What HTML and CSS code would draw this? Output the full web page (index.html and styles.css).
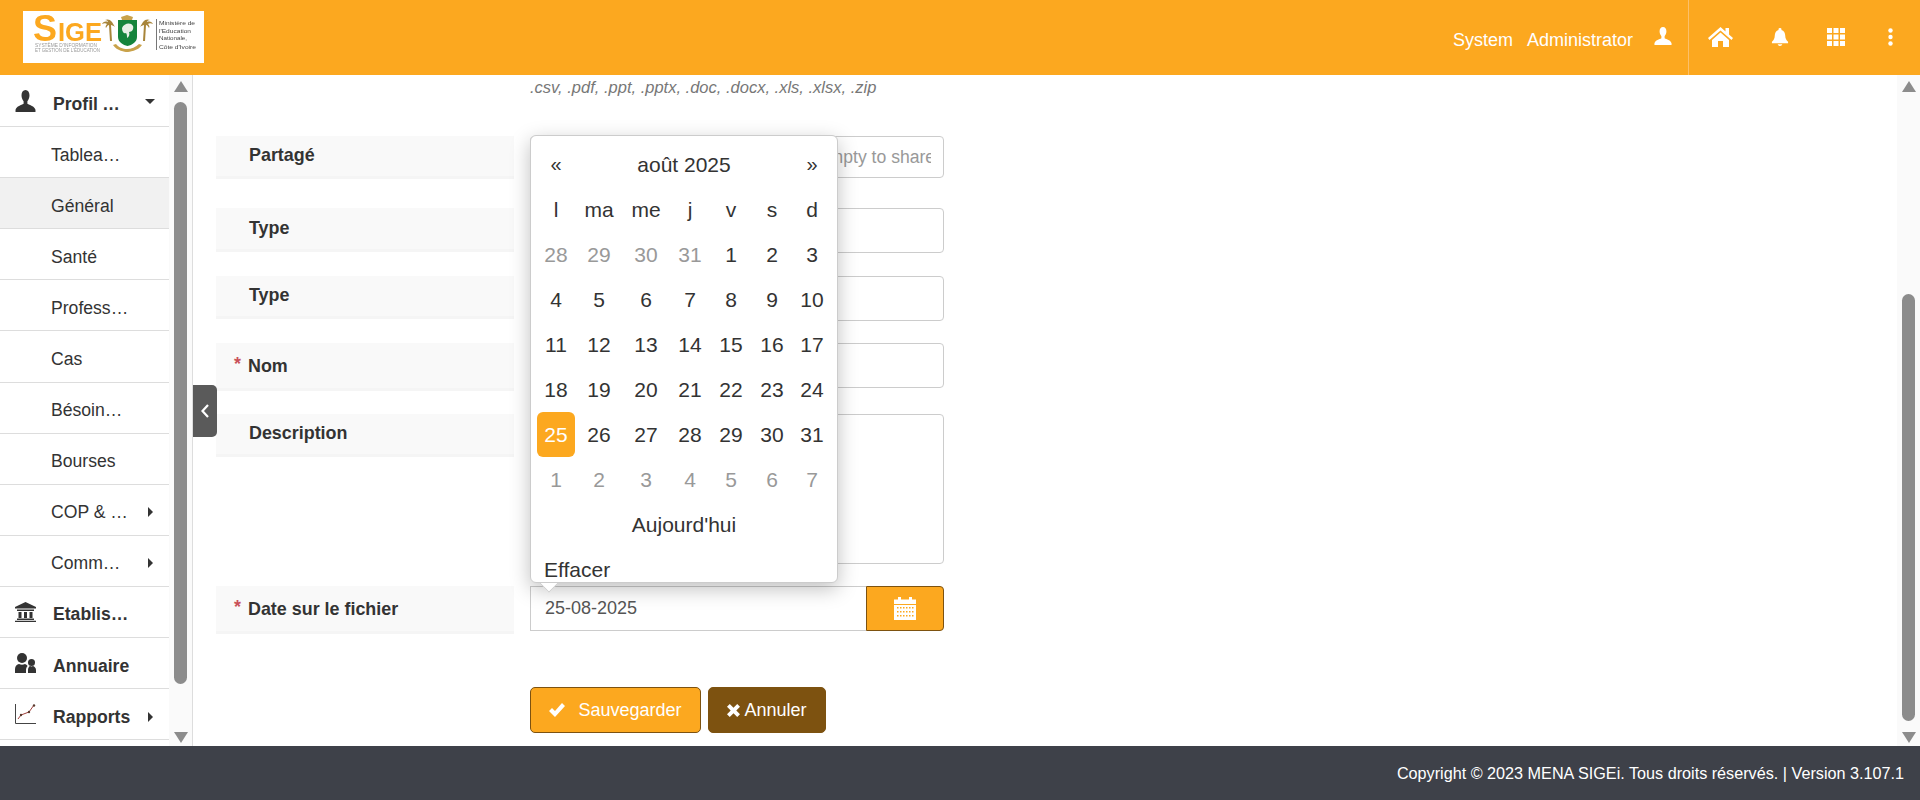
FILE: index.html
```html
<!DOCTYPE html>
<html lang="fr">

<head>
    <meta charset="utf-8">
    <title>SIGE - Document</title>
    <link rel="stylesheet" href="styles.css">
</head>

<body>
    <!-- Top bar -->
    <header class="topbar">
        <div class="logo">
            <svg viewBox="0 0 181 52" width="181" height="52">
                <g class="logo-soft">
                    <text class="logo-sige" x="10" y="30" font-size="36" textLength="24" lengthAdjust="spacingAndGlyphs">S</text>
                    <text class="logo-sige" x="35" y="30" font-size="25" textLength="44" lengthAdjust="spacingAndGlyphs">IGE</text>
                    <text class="logo-small" x="12" y="36" font-size="4.6" textLength="62" lengthAdjust="spacingAndGlyphs">SYSTÈME D'INFORMATION</text>
                    <text class="logo-small" x="12" y="41" font-size="4.6" textLength="65" lengthAdjust="spacingAndGlyphs">ET GESTION DE L'ÉDUCATION</text>
                    <path fill="#a8853a" d="M89 11c-2-3-5-3-7-2 2 0 3 1 3 2-3-1-5 0-6 2 2-1 4-1 5 0-1 1-2 3-1 4 1-2 2-3 3-3l1 16h2l-1-16c1 0 3 1 4 2z" />
                    <path fill="#a8853a" d="M120 11c2-3 5-3 7-2-2 0-3 1-3 2 3-1 5 0 6 2-2-1-4-1-5 0 1 1 2 3 1 4-1-2-2-3-3-3l-1 16h-2l1-16c-1 0-3 1-4 2z" />
                    <path fill="#c9a24a" d="M98 6l3-1 3-1 3 1 3 1-1 3H99z" />
                    <path fill="#c9a24a" d="M90 34c4 6 12 7 14 7s11-1 15-7l-3-1c-3 3-8 5-12 5s-9-2-11-5z" />
                    <path fill="#16843c" d="M95 9h19v17c0 5-5 8-9.500 9-4.500-1-9.500-4-9.500-9z" />
                    <path fill="#e8efe6" d="M99 17c2-5 9-6 11-2 1 3-1 6-4 6 1 2 0 5-2 6 0-2 0-4-1-5-2 1-4-1-4-5z" />
                    <rect x="133" y="8" width="1" height="31" fill="#777" />
                    <g class="logo-minis" font-size="5.800">
                        <text x="136" y="14" textLength="36" lengthAdjust="spacingAndGlyphs">Ministère de</text>
                        <text x="136" y="22" textLength="32" lengthAdjust="spacingAndGlyphs">l'Education</text>
                        <text x="136" y="29" textLength="28" lengthAdjust="spacingAndGlyphs">Nationale,</text>
                        <text x="136" y="38" textLength="37" lengthAdjust="spacingAndGlyphs">Côte d'Ivoire</text>
                    </g>
                </g>
            </svg>
        </div>
        <div class="topbar-right">
            <span class="user-name">System</span>
            <span class="user-name">Administrator</span>
            <svg class="top-icon ic-user" viewBox="0 0 20 20"><use href="#i-user" /></svg>
            <nav class="top-nav">
                <svg class="ic-home" viewBox="0 0 25 20"><path d="M12.500 0L0 11l1.500 2 11-9.500 11 9.500 1.500-2-4-3.500V1h-3.500v3.500z" /><path d="M4 13l8.500-7.400L21 13v7h-6v-6h-5v6H4z" /></svg>
                <svg class="ic-bell" viewBox="0 0 18 20"><path d="M9 0a1.600 1.600 0 0 0-1.500 2C4.800 2.800 3.600 5 3.500 8c-.1 3-1 5-3 6.500V16h17v-1.500c-2-1.500-2.900-3.500-3-6.500-.1-3-1.300-5.200-4-6A1.600 1.600 0 0 0 9 0zM6.500 17a2.600 2.600 0 0 0 5 0z" /></svg>
                <svg class="ic-th" viewBox="0 0 18 18"><path d="M0 0h5v5H0zM6.500 0h5v5h-5zM13 0h5v5h-5zM0 6.500h5v5H0zM6.500 6.500h5v5h-5zM13 6.500h5v5h-5zM0 13h5v5H0zM6.500 13h5v5h-5zM13 13h5v5h-5z" /></svg>
                <svg class="ic-dots" viewBox="0 0 5 18"><circle cx="2.500" cy="2.500" r="2.200" /><circle cx="2.500" cy="9" r="2.200" /><circle cx="2.500" cy="15.500" r="2.200" /></svg>
            </nav>
        </div>
    </header>

    <!-- Shared icons -->
    <svg class="defs" width="0" height="0">
        <symbol id="i-user" viewBox="0 0 20 20">
            <path d="M10 0C7.600 0 6.200 2 6.200 4.800c0 2.200.8 4 2 5.400v2.200C6 13.600 1.500 14.500.5 18v2h19v-2c-1-3.500-5.500-4.400-7.700-5.600v-2.200c1.200-1.400 2-3.200 2-5.400C13.800 2 12.400 0 10 0z" />
        </symbol>
        <symbol id="i-caret" viewBox="0 0 5 10">
            <path d="M0 0l5 5-5 5z" />
        </symbol>
    </svg>

    <div class="shell">
        <!-- Side menu -->
        <aside class="side">
            <ul class="menu">
                <li class="menu-item main-item">
                    <svg class="menu-icon icon-tall" viewBox="0 0 20 20" preserveAspectRatio="none"><use href="#i-user" /></svg>
                    <span class="menu-text">Profil Apprenant</span>
                    <svg class="caret-down" viewBox="0 0 10 5"><path d="M0 0h10L5 5z" /></svg>
                </li>
                <li class="menu-item"><span class="menu-text">Tableau de bord</span></li>
                <li class="menu-item active"><span class="menu-text">Général</span></li>
                <li class="menu-item"><span class="menu-text">Santé</span></li>
                <li class="menu-item"><span class="menu-text">Professionnel</span></li>
                <li class="menu-item"><span class="menu-text">Cas</span></li>
                <li class="menu-item"><span class="menu-text">Bésoins spéciaux</span></li>
                <li class="menu-item"><span class="menu-text">Bourses</span></li>
                <li class="menu-item">
                    <span class="menu-text">COP &amp; Orientation</span>
                    <svg class="caret-right"><use href="#i-caret" /></svg>
                </li>
                <li class="menu-item">
                    <span class="menu-text">Communication</span>
                    <svg class="caret-right"><use href="#i-caret" /></svg>
                </li>
                <li class="menu-item main-item">
                    <svg class="menu-icon" viewBox="0 0 21 20"><path d="M10.500 0L0 5v1.500h21V5zM2 7.500h17V9H2zM3.500 10h3v6h-3zM9 10h3v6H9zM14.500 10h3v6h-3zM2 16.500h17V18H2zM0 18.800h21V20H0z" /></svg>
                    <span class="menu-text">Etablissements</span>
                </li>
                <li class="menu-item main-item">
                    <svg class="menu-icon" viewBox="0 0 21 20"><circle cx="7" cy="5" r="5" /><circle cx="16.500" cy="9.500" r="3.500" /><path d="M0 20v-4c0-3 2-4.500 4-5 2 1 4 1 6 0 1 .4 2 1 2.600 2-1 1-1.600 2.500-1.600 4v3zM13 20v-3c0-2 1-3.500 2-4 1 .6 2 .6 3 0 1.500.5 3 2 3 4v3z" /></svg>
                    <span class="menu-text">Annuaire</span>
                </li>
                <li class="menu-item main-item">
                    <svg class="menu-icon ic-chart" viewBox="0 0 21 20"><path class="chart-axis" d="M.5 0v19.500H21" /><path class="chart-line" d="M3 15l3-4 8-3 5-7" /><circle cx="6" cy="11" r="1.200" /><circle cx="14" cy="8" r="1.200" /><circle cx="19" cy="1.500" r="1.200" /></svg>
                    <span class="menu-text">Rapports</span>
                    <svg class="caret-right"><use href="#i-caret" /></svg>
                </li>
            </ul>
            <div class="scrollbar side-scroll">
                <svg class="arrow" viewBox="0 0 14 11"><path d="M7 0l7 11H0z" /></svg>
                <div class="thumb"></div>
                <svg class="arrow arrow-end" viewBox="0 0 14 11"><path d="M0 0h14L7 11z" /></svg>
            </div>
        </aside>

        <button class="side-toggle" type="button">
            <svg viewBox="0 0 8 14"><path d="M7 1L1.500 7 7 13" /></svg>
        </button>

        <!-- Form -->
        <main class="content">
            <p class="hint">.csv, .pdf, .ppt, .pptx, .doc, .docx, .xls, .xlsx, .zip</p>

            <div class="form-row row-share">
                <label class="form-label">Partagé</label>
                <input class="form-input input-short" type="text" placeholder="Select all users or groups, or leave empty to share with all">
            </div>
            <div class="form-row row-type">
                <label class="form-label label-type">Type</label>
                <input class="form-input" type="text">
            </div>
            <div class="form-row">
                <label class="form-label">Type</label>
                <input class="form-input" type="text">
            </div>
            <div class="form-row row-tight">
                <label class="form-label required"><span class="star">*</span>Nom</label>
                <input class="form-input" type="text">
            </div>
            <div class="form-row">
                <label class="form-label">Description</label>
                <textarea class="form-input form-area"></textarea>
            </div>
            <div class="form-row row-tight">
                <label class="form-label required"><span class="star">*</span>Date sur le fichier</label>
                <div class="date-field">
                    <input class="form-input date-input" type="text" value="25-08-2025">
                    <span class="date-btn">
                        <svg viewBox="0 0 22 23"><path d="M4 0h3v2.500h8V0h3v2.500h4v4.500H0V2.500h4zM0 8h22v15H0z" /><path class="cal-dots" d="M3 10h1.500v1.500H3zM6 10h1.500v1.500H6zM9 10h1.500v1.500H9zM12 10h1.500v1.500H12zM15 10h1.500v1.500H15zM18 10h1.500v1.500H18zM3 14h1.500v1.500H3zM6 14h1.500v1.500H6zM9 14h1.500v1.500H9zM12 14h1.500v1.500H12zM15 14h1.500v1.500H15zM18 14h1.500v1.500H18zM3 18h1.500v1.500H3zM6 18h1.500v1.500H6zM9 18h1.500v1.500H9zM12 18h1.500v1.500H12zM15 18h1.500v1.500H15zM18 18h1.500v1.500H18z" /></svg>
                    </span>

                    <!-- Date picker popup -->
                    <div class="picker">
                        <table class="cal">
                            <colgroup><col><col><col><col><col><col><col></colgroup>
                            <tr>
                                <td class="cal-nav">«</td>
                                <td class="cal-title" colspan="5">août 2025</td>
                                <td class="cal-nav">»</td>
                            </tr>
                            <tr><th>l</th><th>ma</th><th>me</th><th>j</th><th>v</th><th>s</th><th>d</th></tr>
                            <tr><td class="old">28</td><td class="old">29</td><td class="old">30</td><td class="old">31</td><td>1</td><td>2</td><td>3</td></tr>
                            <tr><td>4</td><td>5</td><td>6</td><td>7</td><td>8</td><td>9</td><td>10</td></tr>
                            <tr><td>11</td><td>12</td><td>13</td><td>14</td><td>15</td><td>16</td><td>17</td></tr>
                            <tr><td>18</td><td>19</td><td>20</td><td>21</td><td>22</td><td>23</td><td>24</td></tr>
                            <tr><td class="today">25</td><td>26</td><td>27</td><td>28</td><td>29</td><td>30</td><td>31</td></tr>
                            <tr><td class="old">1</td><td class="old">2</td><td class="old">3</td><td class="old">4</td><td class="old">5</td><td class="old">6</td><td class="old">7</td></tr>
                            <tr><td class="cal-today" colspan="7">Aujourd'hui</td></tr>
                        </table>
                        <div class="cal-clear">Effacer</div>
                    </div>
                    <span class="picker-arrow"></span>
                </div>
            </div>

            <div class="actions">
                <button class="btn btn-save" type="button">
                    <svg viewBox="0 0 16 14"><path d="M0 8l3-3 3 3 7-8 3 3L6 14z" /></svg>
                    Sauvegarder
                </button>
                <button class="btn btn-cancel" type="button">
                    <svg viewBox="0 0 14 14"><path d="M3 0l4 4 4-4 3 3-4 4 4 4-3 3-4-4-4 4-3-3 4-4-4-4z" /></svg>
                    Annuler
                </button>
            </div>
        </main>

        <div class="scrollbar main-scroll">
            <svg class="arrow" viewBox="0 0 14 11"><path d="M7 0l7 11H0z" /></svg>
            <div class="thumb"></div>
            <svg class="arrow arrow-end" viewBox="0 0 14 11"><path d="M0 0h14L7 11z" /></svg>
        </div>
    </div>

    <footer class="footer">Copyright © 2023 MENA SIGEi. Tous droits réservés. | Version 3.107.1</footer>
</body>

</html>
```
FILE: styles.css
```css
:root {
    --orange: #fca81f;
    --brown: #7d5210;
    --text-color: #333;
    --line: #ddd;
}

* {
    box-sizing: border-box;
}

body {
    margin: 0;
    height: 800px;
    overflow: hidden;
    display: flex;
    flex-direction: column;
    font-family: "Liberation Sans", Arial, sans-serif;
    font-size: 17.6px;
    color: var(--text-color);
    background-color: #fff;
}

.defs {
    position: absolute;
}

/* Top bar */
.topbar {
    height: 75px;
    flex: none;
    display: flex;
    justify-content: space-between;
    background-color: var(--orange);
    color: #fff;
}

.logo {
    width: 181px;
    height: 52px;
    margin: 11px 0 0 23px;
    background-color: #fff;
}

.logo svg {
    display: block;
}

.logo-soft {
    filter: blur(.25px);
}

.logo-sige {
    fill: var(--orange);
    font-family: "Liberation Sans", Arial, sans-serif;
    font-weight: bold;
}

.logo-small {
    fill: #999;
    font-family: "Liberation Sans", Arial, sans-serif;
}

.logo-minis {
    fill: #444;
    font-family: "Liberation Sans", Arial, sans-serif;
}

.topbar-right {
    display: flex;
    align-items: center;
    fill: #fff;
}

.user-name {
    margin: 6px 14px 0 0;
    font-size: 18px;
}

.top-icon {
    width: 18px;
    height: 18px;
    margin: 0 16px 4px 7px;
}

.top-nav {
    height: 75px;
    width: 232px;
    display: flex;
    align-items: center;
    border-left: 1px solid #fdc069;
    padding-left: 19px;
}

.ic-home {
    width: 25px;
    height: 20px;
    margin: 0 38px 2px 0;
}

.ic-bell {
    width: 18px;
    height: 19px;
    margin: 0 38px 1px 0;
}

.ic-th {
    width: 18px;
    height: 18px;
    margin: 0 43px 2px 0;
}

.ic-dots {
    width: 5px;
    height: 18px;
    margin-bottom: 2px;
}

/* Main area */
.shell {
    position: relative;
    flex: 1;
    min-height: 0;
    display: flex;
}

.side {
    width: 193px;
    flex: none;
    display: flex;
    border-right: 1px solid #ddd;
}

.menu {
    width: 169px;
    flex: none;
    margin: 0;
    padding: 1px 0 0;
    list-style: none;
    overflow: hidden;
}

.menu-item {
    height: 51.1px;
    display: flex;
    align-items: center;
    padding-left: 51px;
    border-bottom: 1px solid var(--line);
}

.menu-item.active {
    background-color: #f1f1f1;
}

.main-item {
    padding-left: 15px;
    font-weight: bold;
    fill: var(--text-color);
}

.menu-icon {
    width: 21px;
    height: 20px;
    flex: none;
    margin-right: 17px;
}

.icon-tall {
    height: 22px;
}

.ic-chart {
    fill: #5a3b2e;
}

.chart-axis {
    fill: none;
    stroke: #444;
    stroke-width: 1;
}

.chart-line {
    fill: none;
    stroke: #a0413c;
    stroke-width: 1;
}

.menu-text {
    width: 79px;
    flex: none;
    margin-top: 6px;
    white-space: nowrap;
    overflow: hidden;
    text-overflow: ellipsis;
}

.caret-right {
    width: 5px;
    height: 10px;
    flex: none;
    margin: 5px 0 0 18px;
    fill: var(--text-color);
}

.main-item .caret-right {
    margin-left: 16px;
}

.caret-down {
    width: 10px;
    height: 5px;
    flex: none;
    margin-left: 13px;
    fill: var(--text-color);
}

/* Scrollbars */
.scrollbar {
    width: 23px;
    flex: none;
    display: flex;
    flex-direction: column;
    align-items: center;
    padding: 6px 0 3px;
    background-color: #fafafa;
    fill: #8c8c8c;
}

.arrow {
    width: 14px;
    height: 11px;
    flex: none;
}

.arrow-end {
    margin-top: auto;
}

.thumb {
    width: 13px;
    border-radius: 7px;
    background-color: #8c8c8c;
}

.side-scroll .thumb {
    height: 582px;
    margin-top: 10px;
}

.main-scroll .thumb {
    height: 427px;
    margin-top: 202px;
}

.side-toggle {
    position: absolute;
    left: 193px;
    top: 310px;
    width: 24px;
    height: 52px;
    padding: 0;
    border: none;
    border-radius: 0 5px 5px 0;
    background-color: #5a5a5a;
}

.side-toggle svg {
    display: block;
    width: 8px;
    height: 14px;
    margin: 0 auto;
    fill: none;
    stroke: #fff;
    stroke-width: 2.2;
}

/* Form */
.content {
    flex: 1;
    min-width: 0;
    padding-left: 23px;
    overflow: hidden;
}

.hint {
    margin: 0 0 0 314px;
    height: 24px;
    line-height: 24px;
    font-size: 16.5px;
    font-style: italic;
    color: #777;
}

.form-row {
    display: flex;
    align-items: flex-start;
    margin-top: 23px;
}

.row-share {
    margin-top: 37px;
}

.row-type {
    margin-top: 29px;
}

.row-tight {
    margin-top: 22px;
}

.form-label {
    width: 298px;
    flex: none;
    margin-right: 16px;
    padding: 7px 0 8px 33px;
    line-height: 25px;
    font-size: 17.9px;
    font-weight: bold;
    background-color: #f9f9f9;
    border-bottom: 3px solid #f5f5f5;
}

.label-type {
    padding-top: 8px;
}

.form-label.required {
    padding: 11px 0 9px 32px;
}

.star {
    display: inline-block;
    width: 14px;
    margin-left: -14px;
    color: #c9515a;
    position: relative;
    top: -2px;
}

.form-input {
    display: block;
    width: 414px;
    height: 45px;
    padding: 6px 12px;
    border: 1px solid #ccc;
    border-radius: 4px;
    font-family: inherit;
    font-size: 17.6px;
    color: var(--text-color);
    background-color: #fff;
}

.form-input::placeholder {
    color: #999;
}

.input-short {
    height: 42px;
}

.form-area {
    height: 150px;
    resize: none;
}

.date-field {
    position: relative;
    width: 414px;
    display: flex;
}

.date-input {
    width: 336px;
    padding-left: 14px;
    border-radius: 0;
    border-right: none;
    font-size: 18px;
    color: #555;
}

.date-btn {
    width: 78px;
    height: 45px;
    display: flex;
    align-items: center;
    justify-content: center;
    background-color: var(--orange);
    border: 1px solid var(--brown);
    border-radius: 0 4px 4px 0;
    fill: #fff;
}

.date-btn svg {
    width: 22px;
    height: 23px;
}

.cal-dots {
    fill: var(--orange);
}

/* Date picker */
.picker {
    position: absolute;
    left: 0;
    bottom: calc(100% + 3px);
    width: 308px;
    height: 448px;
    padding: 6px 0 0 6px;
    border: 1px solid #ccc;
    border-radius: 6px;
    background-color: #fff;
    box-shadow: 0 6px 20px rgba(0, 0, 0, .25);
    font-size: 21px;
}

.picker-arrow {
    position: absolute;
    left: 12px;
    top: -10px;
    width: 14px;
    height: 14px;
    background-color: #fff;
    border-right: 1px solid #ccc;
    border-bottom: 1px solid #ccc;
    transform: rotate(45deg);
    clip-path: polygon(100% 0, 100% 100%, 0 100%);
}

.cal {
    width: 294px;
    table-layout: fixed;
    border-collapse: collapse;
}

.cal col:nth-child(1) { width: 38px; }
.cal col:nth-child(2) { width: 48px; }
.cal col:nth-child(3) { width: 46px; }
.cal col:nth-child(4) { width: 42px; }
.cal col:nth-child(5) { width: 40px; }
.cal col:nth-child(6) { width: 42px; }
.cal col:nth-child(7) { width: 38px; }

.cal th,
.cal td {
    height: 45px;
    padding: 0;
    text-align: center;
    font-weight: normal;
}

.cal .old {
    color: #999;
}

.cal .today {
    color: #fff;
    background-color: var(--orange);
    border-radius: 6px;
}

.cal-nav {
    font-size: 20px;
}

.cal-clear {
    height: 36px;
    padding: 10px 0 0 7px;
    line-height: 25px;
}

/* Buttons */
.actions {
    display: flex;
    gap: 7px;
    margin: 53px 0 0 314px;
}

.btn {
    height: 46px;
    padding: 0;
    display: flex;
    align-items: center;
    justify-content: center;
    border-radius: 5px;
    border: 1px solid var(--brown);
    font-family: inherit;
    font-size: 18px;
    color: #fff;
    fill: #fff;
}

.btn-save {
    width: 171px;
    gap: 13px;
    background-color: var(--orange);
}

.btn-save svg {
    width: 16px;
    height: 14px;
}

.btn-cancel {
    width: 118px;
    gap: 4px;
    background-color: var(--brown);
}

.btn-cancel svg {
    width: 13px;
    height: 13px;
}

.footer {
    height: 54px;
    flex: none;
    padding: 0 16px 0 0;
    line-height: 55px;
    overflow: hidden;
    text-align: right;
    font-size: 16.2px;
    color: #fff;
    background-color: #3e4149;
}
```
